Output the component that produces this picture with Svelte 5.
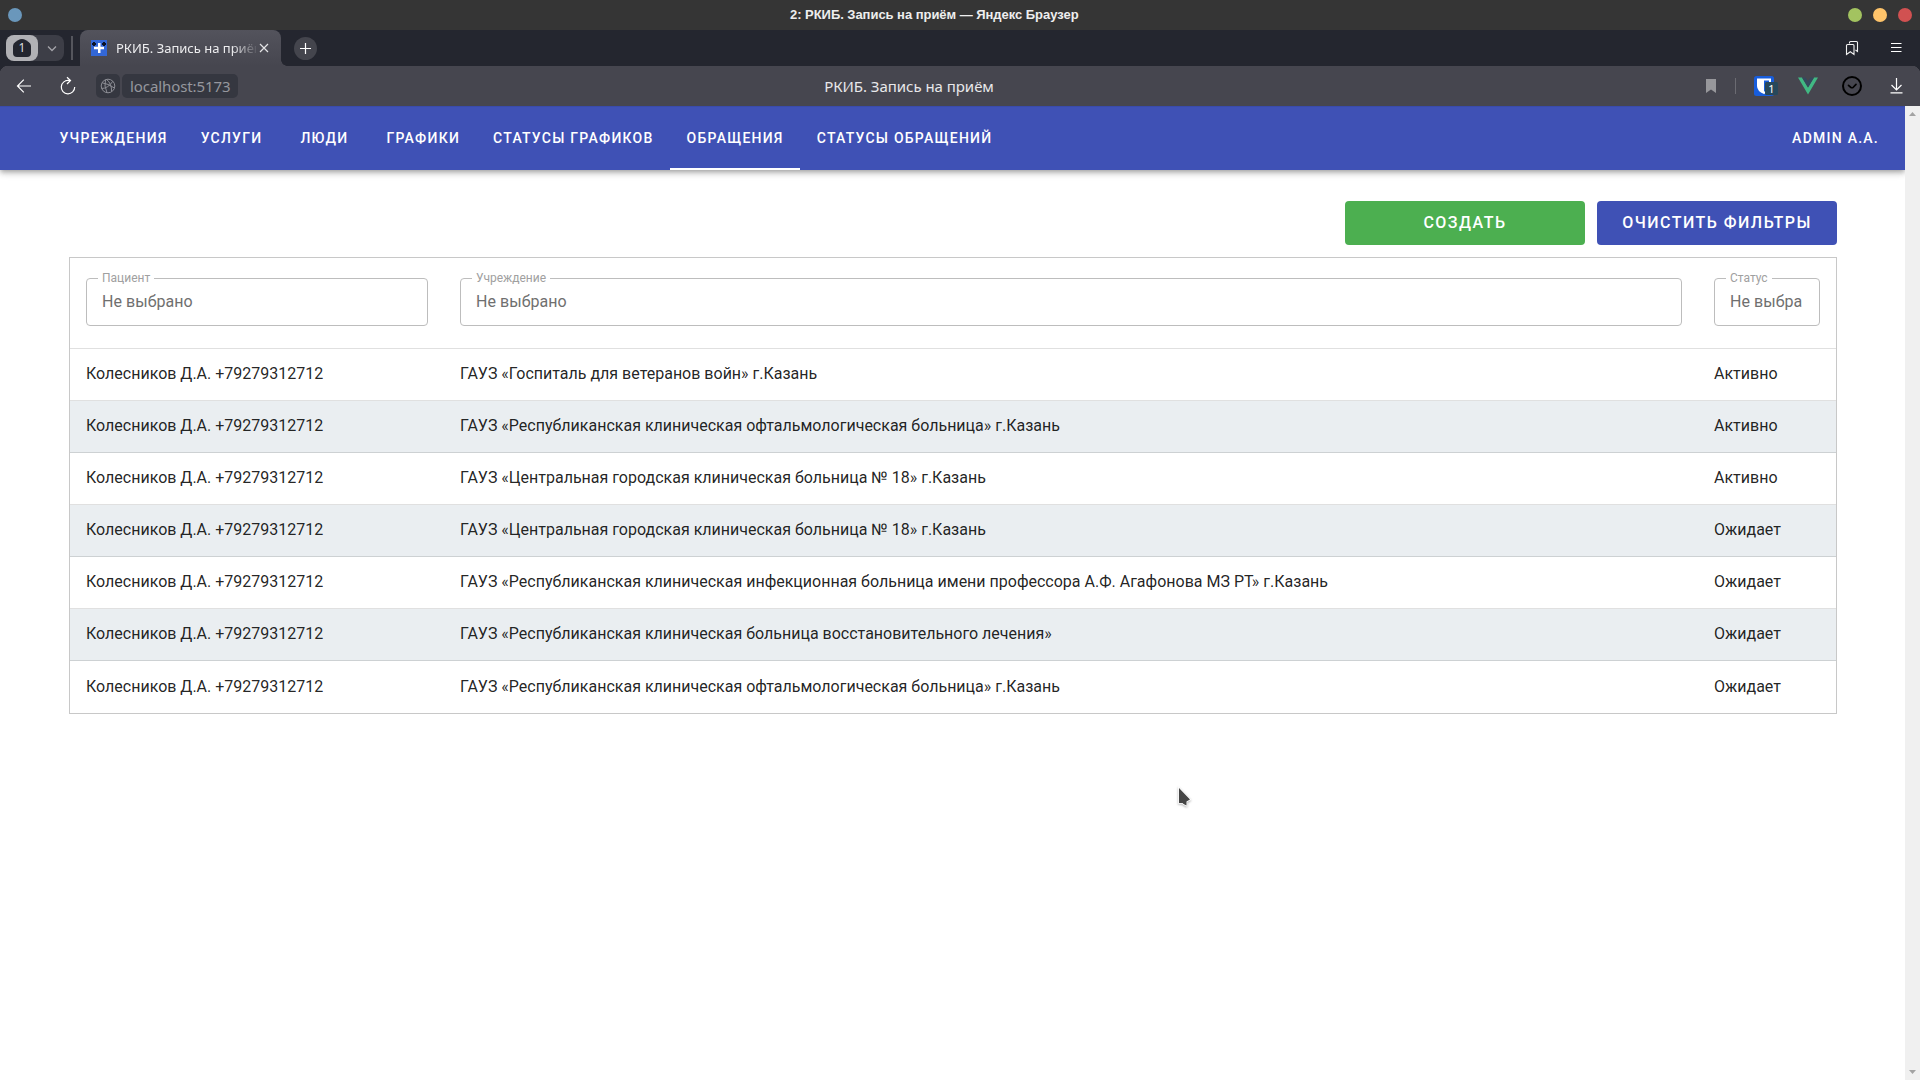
<script>
  const tabs = ['Учреждения', 'Услуги', 'Люди', 'Графики', 'Статусы графиков', 'Обращения', 'Статусы обращений'];
  const active = 'Обращения';
  const filters = ['Пациент', 'Учреждение', 'Статус'];
  const patient = 'Колесников Д.А. +79279312712';
  const rows = [
    ['ГАУЗ «Госпиталь для ветеранов войн» г.Казань', 'Активно'],
    ['ГАУЗ «Республиканская клиническая офтальмологическая больница» г.Казань', 'Активно'],
    ['ГАУЗ «Центральная городская клиническая больница № 18» г.Казань', 'Активно'],
    ['ГАУЗ «Центральная городская клиническая больница № 18» г.Казань', 'Ожидает'],
    ['ГАУЗ «Республиканская клиническая инфекционная больница имени профессора А.Ф. Агафонова МЗ РТ» г.Казань', 'Ожидает'],
    ['ГАУЗ «Республиканская клиническая больница восстановительного лечения»', 'Ожидает'],
    ['ГАУЗ «Республиканская клиническая офтальмологическая больница» г.Казань', 'Ожидает'],
  ];
</script>

<div class="window">
  <header class="titlebar">
    <i class="dot blue"></i>
    <span class="wintitle">2: РКИБ. Запись на приём — Яндекс Браузер</span>
    <div class="winbtns"><i class="dot green"></i><i class="dot yellow"></i><i class="dot red"></i></div>
  </header>

  <div class="tabstrip">
    <div class="group">
      <div class="count">
        <svg width="32" height="26" viewBox="0 0 32 26"><path d="M12 5.2 Q16 2.6 20 5.2 L22.6 7 Q25 8.700 25 11 V18 Q25 22 21 22 H11 Q7 22 7 18 V11 Q7 8.700 9.400 7Z" fill="#24262f" /></svg>
        <span>1</span>
      </div>
      <svg class="chev" width="26" height="26" viewBox="0 0 26 26"><path d="M10 11.500 L14 15.500 L18 11.500" fill="none" stroke="#a5a5ab" stroke-width="1.300" /></svg>
    </div>
    <i class="sep"></i>
    <div class="tab">
      <svg width="16" height="16" viewBox="0 0 16 16"><rect width="16" height="16" fill="#3367d6" /><path d="M1 3h1V2h2v1h1v2H4v1H2V5H1zM11 3h1V2h2v1h1v2h-1v1h-2V5h-1z" fill="#0a1226" /><path d="M7 3h2.500v3.700H13v2.500H9.500v3.800H7V9.200H3V6.700h4z" fill="#fff" /></svg>
      <span class="tabtitle">РКИБ. Запись на приём</span>
      <svg width="10" height="10" viewBox="0 0 10 10"><path d="M1 1L9 9M9 1L1 9" stroke="#e4e4e6" stroke-width="1.200" /></svg>
    </div>
    <div class="plus"><svg width="23" height="23" viewBox="0 0 23 23"><path d="M11.500 6v11M6 11.500h11" stroke="#fff" stroke-width="1.200" /></svg></div>
    <div class="stripright">
      <svg width="14" height="16" viewBox="0 0 14 16"><path d="M4.500 3.500V2.500Q4.500 1.500 5.500 1.500H11.500Q12.500 1.500 12.500 2.500V11.500L10.500 10M1.500 14.500V5.500Q1.500 4.500 2.500 4.500H8Q9 4.500 9 5.500V14.500L5.300 11.800Z" fill="none" stroke="#f2f2f2" stroke-width="1.100" /></svg>
      <svg width="11" height="10" viewBox="0 0 11 10"><path d="M0 .5h10.500M0 4.500h10.500M0 8.500h10.500" stroke="#fff" /></svg>
    </div>
  </div>

  <div class="toolbar">
    <div class="side">
      <svg class="back" width="16" height="16" viewBox="0 0 16 16"><path d="M15 8H1.600M7.800 1.700L1.500 8l6.300 6.300" fill="none" stroke="#fff" stroke-width="1.200" /></svg>
      <svg class="reload" width="18" height="20" viewBox="0 0 18 20"><path d="M10 4.500 A6.700 6.700 0 1 0 15.700 11M6.500 4.500H11.500M8 1.200L11.500 4.500L8 8" fill="none" stroke="#fff" stroke-width="1.200" /></svg>
      <div class="globe">
        <svg width="16" height="16" viewBox="0 0 16 16"><g fill="none" stroke="#8d8e95" stroke-width="1"><circle cx="8" cy="8" r="6.800" /><path d="M2 4.800Q8 5.500 14.400 10M1.500 10.500Q8 10.500 12.800 3.300M5.500 1.700Q3.800 8 7 14.700M6.500 1.300Q12 6 11.500 13.500" /></g></svg>
      </div>
      <div class="url">localhost:5173</div>
    </div>
    <span class="pagetitle">РКИБ. Запись на приём</span>
    <div class="side tools">
      <svg width="10" height="14" viewBox="0 0 10 14"><path d="M0 0H10V14L5 10.500L0 14Z" fill="#97979b" /></svg>
      <i class="line"></i>
      <svg class="shield" width="24" height="20" viewBox="0 0 24 20"><rect width="20" height="20" rx="2.500" fill="#175ddc" /><path d="M3 2.500H17V10Q17 15 10 18Q3 15 3 10Z" fill="#fff" /><path d="M10 4.500H15V10Q15 13.500 10 15.700Z" fill="#175ddc" /><rect x="11" y="6" width="13" height="13" rx="1.500" fill="#27485b" /><text x="17.500" y="17" text-anchor="middle" font-size="11" fill="#fff" font-family="Noto Sans, sans-serif">1</text></svg>
      <svg class="vue" width="20" height="18" viewBox="0 0 20 18"><path d="M0 .5H4L10 10.500L16 .5H20L10 17.500Z" fill="#41b883" /><path d="M4 .5H7.600L10 4.500L12.400 .5H16L10 10.500Z" fill="#35495e" /></svg>
      <svg class="check" width="20" height="20" viewBox="0 0 20 20"><circle cx="10" cy="10" r="9" fill="none" stroke="#000" stroke-width="2" /><path d="M6.500 9.300 L9 11.500 Q10 12 11 11.500 L14 8.300" fill="none" stroke="#000" stroke-width="1.700" stroke-linecap="round" stroke-linejoin="round" /></svg>
      <svg class="down" width="13" height="16" viewBox="0 0 13 16"><path d="M6.500 0V11.500M1.500 7L6.500 12L11.500 7M.5 14.800H12.500" fill="none" stroke="#fff" stroke-width="1.200" /></svg>
    </div>
  </div>

  <div class="viewport">
    <div class="page">
      <nav>
        {#each tabs as t}
          <a class:active={t === active}>{t}</a>
        {/each}
        <a class="user">Admin A.A.</a>
      </nav>
      <main>
        <div class="actions">
          <button class="create">Создать</button>
          <button class="clear">Очистить фильтры</button>
        </div>
        <div class="table">
          <div class="row filters">
            {#each filters as f}
              <div class="cell">
                <div class="field"><span class="label">{f}</span><span class="value">Не выбрано</span></div>
              </div>
            {/each}
          </div>
          {#each rows as [place, status]}
            <div class="row">
              <div class="cell">{patient}</div>
              <div class="cell">{place}</div>
              <div class="cell">{status}</div>
            </div>
          {/each}
        </div>
      </main>
    </div>
    <div class="scroll">
      <svg width="7" height="4" viewBox="0 0 7 4"><path d="M0 4L3.500 0L7 4Z" fill="#a3a3a3" /></svg>
      <svg width="7" height="4" viewBox="0 0 7 4"><path d="M0 0H7L3.500 4Z" fill="#a3a3a3" /></svg>
    </div>
  </div>

  <svg class="cursor" width="16" height="24" viewBox="0 0 16 24"><path d="M2 2L13 13.500L9.500 15.500V19.500L6.500 18L5.500 17H2Z" fill="#464646" stroke="#fff" stroke-width="1.600" paint-order="stroke" /></svg>
</div>

<style>
  :global(body) { margin: 0; background: #fff; }
  .window { position: relative; width: 1920px; height: 1080px; overflow: hidden; display: flex; flex-direction: column; background: #fff; font-family: Roboto, sans-serif; }
  svg { display: block; flex: none; }

  .titlebar { height: 30px; background: #353535; display: grid; grid-template-columns: 790px 1fr auto; align-items: center; flex: none; }
  .dot { display: block; width: 14px; height: 14px; border-radius: 50%; }
  .blue { background: #6a97bb; margin-left: 8px; }
  .green { background: #a3c360; }
  .yellow { background: #ffc46a; }
  .red { background: #d15151; }
  .wintitle { font: bold 13px/30px "Liberation Sans", sans-serif; letter-spacing: -.04px; color: #eee; white-space: nowrap; }
  .winbtns { display: flex; gap: 11px; justify-content: flex-end; padding-right: 8px; }

  .tabstrip { height: 36px; background: #24262f; display: flex; align-items: center; flex: none; }
  .group { margin-left: 6px; width: 58px; height: 26px; border-radius: 8px; background: #3d3e47; display: flex; }
  .count { position: relative; width: 32px; height: 26px; border-radius: 8px; background: #b1b1b5; }
  .count span { position: absolute; inset: 0; text-align: center; font: 12px/25px "Noto Sans", sans-serif; color: #ddd; }
  .sep { width: 2px; height: 24px; background: #55565d; margin-left: 7px; }
  .tab { position: relative; margin-left: 7px; width: 201px; height: 36px; box-sizing: border-box; padding: 0 12px 0 11px; border-radius: 8px 8px 0 0; background: linear-gradient(#53535c, #46464f); display: flex; align-items: center; }
  .tab::after { content: ""; position: absolute; left: 100%; bottom: 0; width: 6px; height: 6px; background: radial-gradient(circle at 6px 0, transparent 5.5px, #46464f 6px); }
  .tabtitle { margin-left: 9px; width: 140px; margin-right: 3px; overflow: hidden; white-space: nowrap; font: 13px/20px "Noto Sans", sans-serif; color: #ececee; mask-image: linear-gradient(90deg, #000 116px, rgba(0,0,0,.1) 140px); }
  .plus { margin-left: 13px; width: 23px; height: 23px; border-radius: 50%; background: #44454d; }
  .stripright { margin-left: auto; display: flex; align-items: center; gap: 32px; padding-right: 18px; }

  .toolbar { height: 40px; display: grid; grid-template-columns: 1fr auto 1fr; align-items: center; flex: none; background: radial-gradient(circle at 8px 8px, #46464f 8px, #24262f 8.5px) left top / 8px 8px no-repeat, radial-gradient(circle at 0 8px, #46464f 8px, #24262f 8.5px) right top / 8px 8px no-repeat, #46464f; }
  .side { display: flex; align-items: center; height: 40px; }
  .back { margin-left: 16px; }
  .reload { margin-left: 27px; }
  .globe { margin-left: 19px; width: 24px; height: 24px; border-radius: 5px; background: #353740; display: grid; place-items: center; }
  .url { margin-left: 2px; width: 116px; height: 24px; border-radius: 5px; background: #353740; box-sizing: border-box; padding-left: 8px; font: 15px/24px "Noto Sans", sans-serif; letter-spacing: -.09px; color: #96979e; }
  .pagetitle { font: 15px/40px "Noto Sans", sans-serif; letter-spacing: -.04px; color: #e8e8ea; white-space: nowrap; padding-right: 102px; }
  .tools { justify-content: flex-end; padding-right: 17px; }
  .line { width: 1px; height: 16px; background: #6b6b72; margin-left: 19px; }
  .shield { margin-left: 18px; }
  .vue { margin-left: 20px; }
  .check { margin-left: 24px; }
  .down { margin-left: 28px; }

  .viewport { flex: 1; display: flex; min-height: 0; }
  .page { width: 1905px; overflow: hidden; }
  .scroll { width: 15px; background: #f0f0f0; display: flex; flex-direction: column; justify-content: space-between; align-items: center; padding: 6px 0; box-sizing: border-box; }

  nav { height: 64px; padding: 0 9.5px 0 43px; box-sizing: border-box; display: flex; background: linear-gradient(#394bab 1px, #3f51b5 1px); box-shadow: 0 2px 4px -1px rgba(0,0,0,.2), 0 4px 5px rgba(0,0,0,.14), 0 1px 10px rgba(0,0,0,.12); }
  nav a { box-sizing: border-box; min-width: 91px; padding: 0 16.5px; text-align: center; white-space: nowrap; font-size: 14px; font-weight: 500; line-height: 64px; letter-spacing: 1.25px; text-transform: uppercase; color: #fff; }
  nav a.active { box-shadow: inset 0 -2px #fff; }
  nav .user { margin-left: auto; }

  main { padding: 31px 68px 0 69px; }
  .actions { display: flex; justify-content: flex-end; gap: 12px; }
  button { width: 240px; height: 44px; padding: 0; border: 0; border-radius: 4px; color: #fff; font: 500 16px/42px Roboto, sans-serif; letter-spacing: 1.48px; text-transform: uppercase; }
  .create { background: #4caf50; }
  .clear { background: #3f51b5; }
  .table { margin-top: 12px; border: 1px solid #c8c8c8; }
  .row { display: grid; grid-template-columns: 374px 1254px 138px; height: 52px; box-sizing: border-box; border-bottom: 1px solid rgba(0,0,0,.12); font-size: 16px; line-height: 49px; color: rgba(0,0,0,.87); }
  .row:last-child { border-bottom: 0; line-height: 51px; }
  .row:nth-child(odd):not(.filters) { background: #eaeef1; }
  .cell { padding: 0 16px; white-space: nowrap; min-width: 0; }
  .filters { height: 91px; }
  .filters .cell { padding-top: 20px; }
  .field { position: relative; height: 48px; box-sizing: border-box; border: 1px solid #bdbdbd; border-radius: 4px; padding: 0 17px 0 15px; }
  .value { display: block; overflow: hidden; line-height: 46px; letter-spacing: .05px; color: #6f6f6f; }
  .label { position: absolute; left: 11px; top: -9px; padding: 0 4px; background: #fff; font-size: 12px; line-height: 16px; color: #a0a0a0; }

  .cursor { position: absolute; left: 1177px; top: 786px; filter: drop-shadow(0 1px 1px rgba(0,0,0,.3)); }
</style>
